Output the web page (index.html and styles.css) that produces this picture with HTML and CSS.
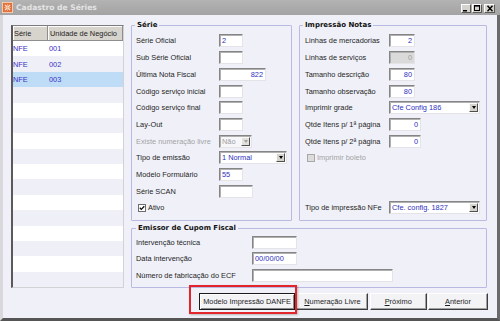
FILE: index.html
```html
<!DOCTYPE html>
<html>
<head>
<meta charset="utf-8">
<title>Cadastro de Séries</title>
<link rel="stylesheet" href="styles.css">
</head>
<body>
<div class="window">
  <div class="titlebar">
    <span class="appicon">
      <svg width="11" height="11" viewBox="0 0 11 11">
        <rect x="0" y="0" width="11" height="11" fill="#e2703e"/>
        <rect x="0.5" y="0.5" width="10" height="10" fill="none" stroke="#f6c9a8" stroke-width="1"/>
        <path d="M3 3 L8 8 M8 3 L3 8" stroke="#fbe3d2" stroke-width="1.2"/>
        <path d="M5.5 2 V9 M2 5.5 H9" stroke="#f7b48c" stroke-width="0.8"/>
      </svg>
    </span>
    <span class="title">Cadastro de Séries</span>
    <span class="tb-buttons">
      <span class="tb-btn"><svg width="8" height="7" viewBox="0 0 8 7"><rect x="1" y="5" width="4" height="1.5" fill="#000"/></svg></span>
      <span class="tb-btn"><svg width="8" height="7" viewBox="0 0 8 7"><rect x="1.5" y="0.5" width="5" height="5" fill="none" stroke="#000" stroke-width="1"/><rect x="1" y="0" width="6" height="1.6" fill="#000"/></svg></span>
      <span class="tb-btn tb-close"><svg width="8" height="7" viewBox="0 0 8 7"><path d="M1.5 0.8 L6.5 6.2 M6.5 0.8 L1.5 6.2" stroke="#000" stroke-width="1.4"/></svg></span>
    </span>
  </div>

  <div class="frame">
    <div class="list">
      <div class="list-head"><span class="hc c1">Série</span><span class="hc c2">Unidade de Negócio</span></div>
      <div class="list-row"><span class="c1">NFE</span><span class="c2">001</span></div>
      <div class="list-row alt"><span class="c1">NFE</span><span class="c2">002</span></div>
      <div class="list-row sel"><span class="c1">NFE</span><span class="c2">003</span></div>
      <div class="list-row alt"></div>
      <div class="list-row"></div>
      <div class="list-row alt"></div>
      <div class="list-row"></div>
      <div class="list-row alt"></div>
      <div class="list-row"></div>
      <div class="list-row alt"></div>
      <div class="list-row"></div>
      <div class="list-row alt"></div>
      <div class="list-row"></div>
      <div class="list-row alt"></div>
      <div class="list-row"></div>
      <div class="list-row alt"></div>
    </div>

    <div class="right">
      <div class="top-groups">
        <fieldset class="group g-serie">
          <legend>Série</legend>
          <div class="rows">
            <div class="row"><span class="lbl">Série Oficial</span><span class="field w24">2</span></div>
            <div class="row"><span class="lbl">Sub Série Oficial</span><span class="field w24"></span></div>
            <div class="row"><span class="lbl">Última Nota Fiscal</span><span class="field w47 num">822</span></div>
            <div class="row"><span class="lbl">Código serviço inicial</span><span class="field w24"></span></div>
            <div class="row"><span class="lbl">Código serviço final</span><span class="field w24"></span></div>
            <div class="row"><span class="lbl">Lay-Out</span><span class="field w24"></span></div>
            <div class="row"><span class="lbl disabled">Existe numeração livre</span><span class="combo w33 combo-dis"><span class="val">Não</span><span class="dd"><span class="tri"></span></span></span></div>
            <div class="row"><span class="lbl">Tipo de emissão</span><span class="combo w68"><span class="val">1 Normal</span><span class="dd"><span class="tri"></span></span></span></div>
            <div class="row"><span class="lbl">Modelo Formulário</span><span class="field w24">55</span></div>
            <div class="row"><span class="lbl">Série SCAN</span><span class="field w34"></span></div>
            <div class="row"><span class="check">
              <svg width="8" height="8" viewBox="0 0 8 8"><rect x="0.5" y="0.5" width="7" height="7" fill="#fff" stroke="#6d6d6d"/><path d="M1.8 3.8 L3.3 5.4 L6.3 2.2" fill="none" stroke="#111" stroke-width="1.3"/></svg>
            </span><span class="chk-lbl">Ativo</span></div>
          </div>
        </fieldset>

        <fieldset class="group g-impressao">
          <legend>Impressão Notas</legend>
          <div class="rows">
            <div class="row"><span class="lbl">Linhas de mercadorias</span><span class="field w26 num">2</span></div>
            <div class="row"><span class="lbl">Linhas de serviços</span><span class="field w26 num field-dis">0</span></div>
            <div class="row"><span class="lbl">Tamanho descrição</span><span class="field w26 num">80</span></div>
            <div class="row"><span class="lbl">Tamanho observação</span><span class="field w26 num">80</span></div>
            <div class="row"><span class="lbl">Imprimir grade</span><span class="combo w91"><span class="val">Cfe Config 186</span><span class="dd"><span class="tri"></span></span></span></div>
            <div class="row"><span class="lbl">Qtde Itens p/ 1ª página</span><span class="field w32 num">0</span></div>
            <div class="row"><span class="lbl">Qtde Itens p/ 2ª página</span><span class="field w32 num">0</span></div>
            <div class="row"><span class="check">
              <svg width="8" height="8" viewBox="0 0 8 8"><rect x="0.5" y="0.5" width="7" height="7" fill="#dcdcdc" stroke="#a8a8a8"/></svg>
            </span><span class="chk-lbl disabled">Imprimir boleto</span></div>
            <div class="row"></div>
            <div class="row"></div>
            <div class="row"><span class="lbl">Tipo de impressão NFe</span><span class="combo w91"><span class="val">Cfe. config. 1827</span><span class="dd"><span class="tri"></span></span></span></div>
          </div>
        </fieldset>
      </div>

      <fieldset class="group g-emissor">
        <legend>Emissor de Cupom Fiscal</legend>
        <div class="rows">
          <div class="row"><span class="lbl">Intervenção técnica</span><span class="field w45"></span></div>
          <div class="row"><span class="lbl">Data intervenção</span><span class="field w45">00/00/00</span></div>
          <div class="row"><span class="lbl">Número de fabricação do ECF</span><span class="field w141"></span></div>
        </div>
      </fieldset>

      <div class="buttons">
        <span class="hl"><span class="btn btn-default b96">Modelo Impressão DANFE</span></span>
        <span class="btn b72"><u>N</u>umeração Livre</span>
        <span class="btn b57"><u>P</u>róximo</span>
        <span class="btn b60"><u>A</u>nterior</span>
      </div>
    </div>
  </div>
</div>
</body>
</html>
```

FILE: styles.css
```css
* { box-sizing: border-box; }

html, body {
  margin: 0;
  padding: 0;
}

body {
  width: 500px;
  height: 321px;
  overflow: hidden;
  font-family: "Liberation Sans", Arial, sans-serif;
  font-size: 7.4px;
  color: #1e1e1e;
  background: #f0f1f8;
}

.window {
  width: 500px;
  height: 321px;
  display: flex;
  flex-direction: column;
  background: #f0f1f8;
}

/* title bar */
.titlebar {
  height: 15px;
  flex: none;
  display: flex;
  align-items: center;
  padding: 0 5px 0 2px;
  background: linear-gradient(#b3b3b3, #a3a3a3);
}

.appicon {
  width: 11px;
  height: 11px;
  display: flex;
  margin-right: 3px;
}

.title {
  flex: 1;
  font-family: "DejaVu Sans", sans-serif;
  font-weight: bold;
  font-size: 7.6px;
  color: #e4e4e4;
}

.tb-buttons {
  display: flex;
  gap: 1px;
  margin-top: 1px;
}

.tb-btn {
  width: 10px;
  height: 9px;
  display: flex;
  align-items: center;
  justify-content: center;
  background: #d6d3ce;
  border: 1px solid;
  border-color: #fff #5a5a5a #5a5a5a #fff;
}

.tb-close {
  width: 11px;
  margin-left: 1px;
}

/* frame */
.frame {
  flex: 1;
  display: flex;
  gap: 7px;
  padding: 5px 0 0 8px;
  border-left: 3px solid #d9d9dc;
  border-right: 3px solid #6a6a6a;
  border-bottom: 3px solid #555;
}

/* list */
.list {
  width: 113px;
  height: 263px;
  margin-top: 5px;
  flex: none;
  display: flex;
  flex-direction: column;
  background: #fff;
  border-left: 2px solid #5a5a5a;
  border-top: 1px solid #7c7c7c;
  border-right: 1px solid #d2d2d6;
  border-bottom: 1px solid #d2d2d6;
}

.list-head {
  height: 15px;
  flex: none;
  display: flex;
}

.hc {
  display: flex;
  align-items: center;
  background: #d7d4ce;
  border-right: 1px solid #8e8e8e;
  border-bottom: 1px solid #8e8e8e;
  box-shadow: inset 1px 1px 0 #fbfbfb;
  color: #1c1c1c;
  padding-left: 1px;
}

.c1 { width: 35px; }
.c2 { flex: 1; }

.list-head .c2 { padding-left: 2px; }

.list-row {
  height: 15.375px;
  flex: none;
  display: flex;
  align-items: center;
  color: #3a32c4;
  background: #fff;
}

.list-row .c2 { padding-left: 1px; }

.list-row.alt { background: #eff0f7; }
.list-row.sel { background: #bfdcf6; }

/* right column */
.right {
  width: 357px;
  flex: none;
  display: flex;
  flex-direction: column;
}

.top-groups {
  display: flex;
  gap: 7px;
  height: 201px;
}

.group {
  margin: 0;
  padding: 0;
  min-width: 0;
  border: 1px solid #b9b9e4;
  border-radius: 1px;
}

.group legend {
  font-family: "DejaVu Sans", sans-serif;
  font-weight: bold;
  font-size: 7px;
  line-height: 10px;
  padding: 0 2px;
  margin-left: 3px;
  color: #111;
}

.g-serie { width: 161px; }
.g-impressao { width: 188px; }

.g-serie .rows { padding: 2.6px 0 0 4px; }
.g-impressao .rows { padding: 2.6px 0 0 5px; }

.row {
  height: 16.7px;
  display: flex;
  align-items: center;
}

.g-serie .lbl { width: 83px; }
.g-impressao .lbl { width: 84px; }

.lbl { flex: none; white-space: nowrap; }
.disabled { color: #a2a2a6; }

/* fields */
.field {
  height: 13px;
  flex: none;
  display: flex;
  align-items: center;
  padding: 0 2px;
  background: #fff;
  color: #3030c2;
  border: 1px solid;
  border-color: #858585 #e4e4e8 #e4e4e8 #858585;
  box-shadow: inset 1px 1px 0 #b0b0b0;
}

.field.num { justify-content: flex-end; }

.field-dis {
  background: #dadada;
  color: #9c9c9c;
}

.w24 { width: 24px; }
.w26 { width: 26px; }
.w32 { width: 32px; }
.w33 { width: 33px; }
.w34 { width: 34px; }
.w45 { width: 45px; }
.w47 { width: 47px; }
.w68 { width: 68px; }
.w91 { width: 91px; }
.w141 { width: 141px; }

/* combos */
.combo {
  height: 13px;
  flex: none;
  display: flex;
  background: #fff;
  border: 1px solid;
  border-color: #858585 #e4e4e8 #e4e4e8 #858585;
  box-shadow: inset 1px 1px 0 #b0b0b0;
  padding: 1px;
}

.combo .val {
  flex: 1;
  display: flex;
  align-items: center;
  padding-left: 1px;
  color: #3030c2;
  white-space: nowrap;
  overflow: hidden;
}

.combo .dd {
  width: 9px;
  display: flex;
  align-items: center;
  justify-content: center;
  background: #d6d3ce;
  border: 1px solid;
  border-color: #fafafa #505050 #505050 #fafafa;
}

.tri {
  width: 0;
  height: 0;
  border-left: 2.5px solid transparent;
  border-right: 2.5px solid transparent;
  border-top: 3px solid #000;
}

.combo-dis { background: #f7f7f9; }
.combo-dis .val { color: #a0a0a4; }
.combo-dis .dd { background: #e2e0dc; }
.combo-dis .tri { border-top-color: #a0a0a0; }

/* checkboxes */
.check {
  display: flex;
  margin-left: 2px;
  margin-right: 2px;
}

.chk-lbl { white-space: nowrap; }

/* emissor */
.g-emissor {
  width: 356px;
  height: 65px;
  margin-top: 2px;
}

.g-emissor legend { margin-left: 4px; }

.g-emissor .rows { padding: 0.75px 0 0 4px; }
.g-emissor .row { height: 16.5px; }
.g-emissor .lbl { width: 116px; }

/* buttons */
.buttons {
  display: flex;
  justify-content: flex-end;
  gap: 1.3px;
  margin-top: 5px;
  height: 17px;
}

.btn {
  height: 17px;
  display: flex;
  align-items: center;
  justify-content: center;
  background: #f3f3f6;
  color: #1e1e1e;
  white-space: nowrap;
  border: 1px solid;
  border-color: #ffffff #3c3c3c #3c3c3c #ffffff;
  box-shadow: inset -1px -1px 0 #a0a0a0;
}

.btn u { text-decoration: underline; text-underline-offset: 1px; }

.btn-default {
  border: 1px solid #1a1a1a;
  box-shadow: inset 1px 1px 0 #fff, inset -1px -1px 0 #8a8a8a;
}

.b96 { width: 96px; }
.b72 { width: 72px; }
.b57 { width: 57px; }
.b60 { width: 60px; }

.hl {
  position: relative;
  display: flex;
}

.hl::after {
  content: "";
  position: absolute;
  left: -10px;
  top: -8px;
  right: -2px;
  bottom: -4px;
  border: 2px solid #e2252b;
  box-shadow: 1px 1px 2px rgba(0, 0, 0, 0.25);
  pointer-events: none;
}
```
